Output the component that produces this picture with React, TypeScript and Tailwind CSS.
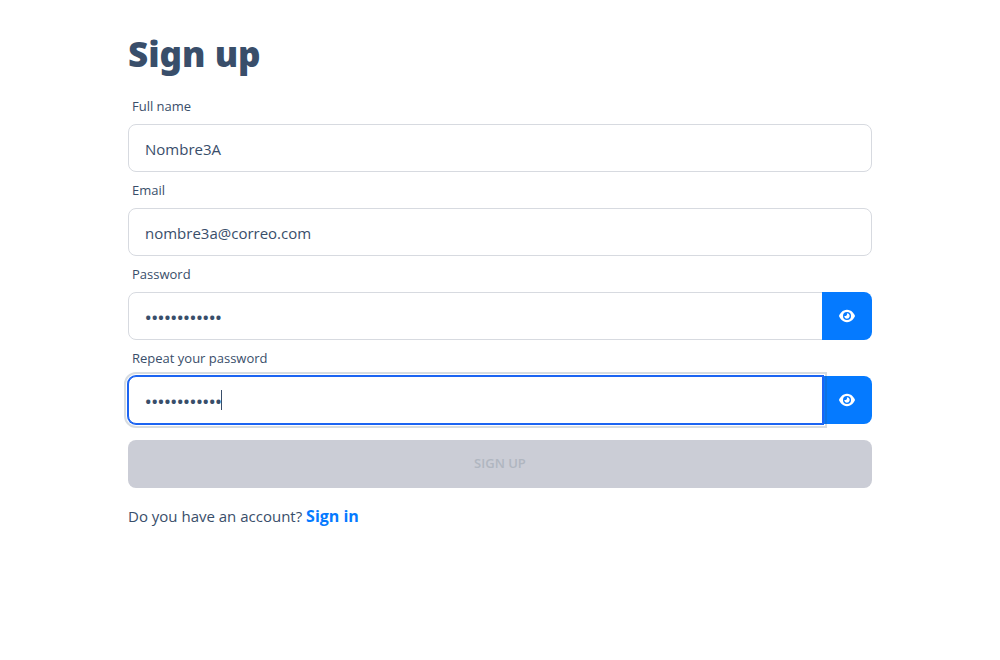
import { useState } from "react";
import { FaEye } from "react-icons/fa6";

const fieldClass =
  "h-12 w-full min-w-0 border border-[#d7dae0] bg-white px-4 pt-0.5 text-[#394e6a]";

function TextField({ id, label, type, initial }: { id: string; label: string; type: string; initial: string }) {
  const [value, setValue] = useState(initial);
  return (
    <div className="flex flex-col">
      <label htmlFor={id} className="px-1 py-2 text-[13px] leading-5">
        {label}
      </label>
      <input
        id={id}
        type={type}
        value={value}
        onChange={(e) => setValue(e.target.value)}
        className={`${fieldClass} rounded-lg text-[15px]`}
      />
    </div>
  );
}

function PasswordField({ id, label, initial, autoFocus }: { id: string; label: string; initial: string; autoFocus?: boolean }) {
  const [value, setValue] = useState(initial);
  const [visible, setVisible] = useState(false);
  const [focused, setFocused] = useState(Boolean(autoFocus));
  const showCaret = focused && !visible && value === initial;
  return (
    <div className="flex flex-col">
      <label htmlFor={id} className="px-1 py-2 text-[13px] leading-5">
        {label}
      </label>
      <div className="relative flex">
        <input
          id={id}
          type={visible ? "text" : "password"}
          value={value}
          autoFocus={autoFocus}
          onFocus={() => setFocused(true)}
          onBlur={() => setFocused(false)}
          onChange={(e) => setValue(e.target.value)}
          className={`${fieldClass} rounded-l-lg text-[17px] font-semibold focus:relative focus:z-10 focus:border-[#1c64f2] focus:ring-1 focus:ring-[#1c64f2] focus:outline-2 focus:outline-offset-2 focus:outline-[#394e6a]/20`}
        />
        {showCaret && (
          <span
            aria-hidden="true"
            className="pointer-events-none absolute inset-y-0 left-4 z-20 flex items-center text-[17px] font-semibold"
          >
            <span className="invisible">{"•".repeat(value.length)}</span>
            <span className="h-5 w-px bg-[#394e6a]" />
          </span>
        )}
        <button
          type="button"
          aria-label={visible ? "Hide password" : "Show password"}
          onClick={() => setVisible(!visible)}
          className="-ml-px flex h-12 w-[50px] shrink-0 items-center justify-center rounded-r-lg bg-[#057aff] text-white"
        >
          <FaEye size={16} />
        </button>
      </div>
    </div>
  );
}

export default function App() {
  return (
    <main className="px-32 pt-8 font-['Open_Sans','Noto_Sans',sans-serif] text-[#394e6a]">
      <h1 className="mb-3 font-['Noto_Sans',sans-serif] text-[35px] leading-11 font-black">Sign up</h1>
      <form className="flex flex-col" onSubmit={(e) => e.preventDefault()}>
        <TextField id="name" label="Full name" type="text" initial="Nombre3A" />
        <TextField id="email" label="Email" type="email" initial="nombre3a@correo.com" />
        <PasswordField id="password" label="Password" initial="contrasena12" />
        <PasswordField id="repeat" label="Repeat your password" initial="contrasena12" autoFocus />
        <button type="submit" disabled className="mt-4 h-12 rounded-lg bg-[#cbcdd6] text-[13px] font-semibold text-[#b0b6c0] uppercase">
          Sign up
        </button>
      </form>
      <p className="mt-4 text-[15px] leading-6">
        Do you have an account?{" "}
        <a href="#signin" className="text-base font-bold text-[#057aff]">
          Sign in
        </a>
      </p>
    </main>
  );
}
